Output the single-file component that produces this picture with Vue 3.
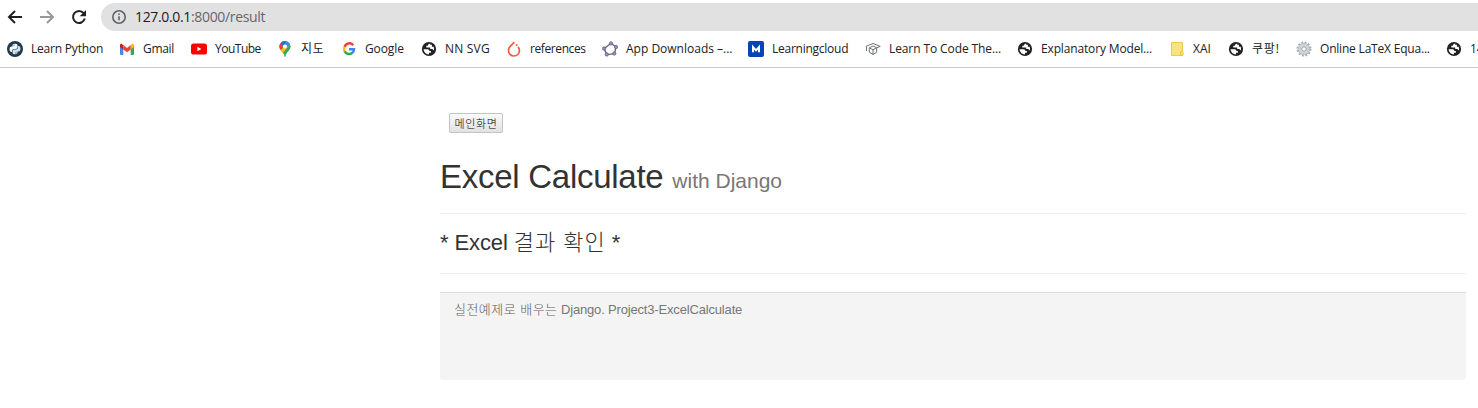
<script setup>
const bookmarks = [
  { icon: 'python', label: 'Learn Python', width: 112, spacing: -0.2 },
  { icon: 'gmail', label: 'Gmail', width: 72, spacing: -0.3 },
  { icon: 'youtube', label: 'YouTube', width: 86, spacing: -0.5 },
  { icon: 'maps', label: '지도', width: 64, spacing: 0.8 },
  { icon: 'google', label: 'Google', width: 80, spacing: -0.1 },
  { icon: 'globe', label: 'NN SVG', width: 85, spacing: 0.2 },
  { icon: 'torch', label: 'references', width: 96, spacing: -0.4 },
  { icon: 'geogebra', label: 'App Downloads –...', width: 146, spacing: 0 },
  { icon: 'mcloud', label: 'Learningcloud', width: 117, spacing: -0.25 },
  { icon: 'cap', label: 'Learn To Code The...', width: 152, spacing: -0.1 },
  { icon: 'globe', label: 'Explanatory Model...', width: 152, spacing: -0.15 },
  { icon: 'note', label: 'XAI', width: 59, spacing: 0 },
  { icon: 'globe', label: '쿠팡!', width: 68, spacing: 0.8 },
  { icon: 'gear', label: 'Online LaTeX Equa...', width: 150, spacing: -0.2 },
  { icon: 'globe', label: '14', width: 60, spacing: 0 },
]
</script>

<template>
  <div class="window">
    <div class="toolbar">
      <svg class="nav" viewBox="0 0 16 16"><path d="M15 8H2M8 2L2 8l6 6" /></svg>
      <svg class="nav off" viewBox="0 0 16 16"><path d="M1 8h13M8 2l6 6-6 6" /></svg>
      <svg class="nav" viewBox="0 0 16 16"><path d="M12.7 4.2A6 6 0 1 0 13.8 9.6" /><path class="solid" d="M15 1v6.3H8.7z" /></svg>
      <div class="address">
        <svg class="info" viewBox="0 0 16 16"><circle cx="8" cy="8" r="6.2" /><path d="M8 7.2v4M8 4.4v1.6" /></svg>
        <span class="url">127.0.0.1<span class="path">:8000/result</span></span>
      </div>
    </div>

    <div class="bookmarks">
      <div v-for="(b, i) in bookmarks" :key="i" class="bookmark" :style="{ width: b.width + 'px' }">
        <svg class="icon" viewBox="0 0 16 16">
          <g v-if="b.icon === 'python'">
            <circle cx="8" cy="8" r="8" fill="#1e3a50" />
            <path d="M5.5 5.5V4q0-1.3 2.5-1.3T10.5 4v2.2Q10.5 8 8.5 8H7Q5 8 5 9.8V11H4Q2.500 11 2.500 8.200T4.300 5.500H8" fill="#f4f7f9" />
            <path d="M10.500 10.500V12q0 1.300-2.500 1.300T5.500 12V9.800Q5.500 8.500 7.500 8.500H9Q11 8.500 11 6.200V5h1q1.500 0 1.500 2.800t-1.800 2.700H8" fill="#d9e2e8" />
            <circle cx="7" cy="4.100" r=".6" fill="#1e3a50" /><circle cx="9" cy="11.900" r=".6" fill="#1e3a50" />
          </g>
          <g v-else-if="b.icon === 'gmail'">
            <path d="M1 4v9q0 1 1 1h2.300V6z" fill="#4285f4" />
            <path d="M15 4v9q0 1-1 1h-2.300V6z" fill="#34a853" />
            <path d="M11.700 4.500v4L15 6V4q0-1.800-1.800-1.200z" fill="#fbbc04" />
            <path d="M1 4v2l3.300 2.500v-4L2.800 2.800Q1 2.200 1 4z" fill="#c5221f" />
            <path d="M4.300 4.100L8 7l3.700-2.900v4.400L8 11.300 4.300 8.500z" fill="#ea4335" />
          </g>
          <g v-else-if="b.icon === 'youtube'">
            <rect y="2.500" width="16" height="11" rx="2.600" fill="#f00" /><path d="M6.400 5.700v4.600l4-2.300z" fill="#fff" />
          </g>
          <g v-else-if="b.icon === 'maps'">
            <path d="M8 0a5.600 5.600 0 0 1 5.600 5.600C13.600 9.500 9 11 8.500 15.500q-.5 1-1 0C7 11 2.400 9.500 2.400 5.600A5.600 5.600 0 0 1 8 0z" fill="#34a853" />
            <path d="M8 5.600L3.500 9A6 6 0 0 1 3.700 2z" fill="#ea4335" />
            <path d="M3.500 9Q5 11 6 12l6.500-7.800L8 5.600z" fill="#fbbc04" />
            <path d="M3.700 2A5.600 5.600 0 0 1 9.700.3L6 5z" fill="#1a73e8" />
            <path d="M9.700.3A5.600 5.600 0 0 1 13 3.300L9 8 6 5z" fill="#4285f4" />
            <circle cx="8" cy="5.600" r="2.100" fill="#fff" />
          </g>
          <g v-else-if="b.icon === 'google'" fill="none" stroke-width="2.500">
            <path d="M12.200 4.200A5 5 0 0 0 3.600 5.800" stroke="#ea4335" />
            <path d="M3.600 5.700a5 5 0 0 0 0 4.600" stroke="#fbbc05" />
            <path d="M3.600 10.200A5 5 0 0 0 11.400 11.800" stroke="#34a853" />
            <path d="M8 8.200h5Q12.900 10.500 11.300 11.900" stroke="#4285f4" />
          </g>
          <g v-else-if="b.icon === 'globe'">
            <circle cx="8" cy="8" r="7.100" fill="#202124" />
            <path d="M9.200 2.600Q6.800 3.200 6.800 4.700H5.300v1.900h3.900v1.500h2.200l1.200 1.500Q13.600 8 12.700 5.700H10.900V3.800H9.200z" fill="#fff" />
            <path d="M2.500 8.200h4.300q1.600 0 1.600 1.700h1.500v1.800H8v1.700Q3.200 13.300 2.500 8.200z" fill="#fff" />
          </g>
          <g v-else-if="b.icon === 'torch'">
            <path d="M8.400 1.200L4 5.700a5.500 5.500 0 1 0 8 .1" fill="none" stroke="#ee5a40" stroke-width="1.700" />
            <circle cx="10.700" cy="4" r="1" fill="#ee5a40" />
          </g>
          <g v-else-if="b.icon === 'geogebra'">
            <path d="M9 2.300L14 6l-1.500 6.600-7.700 1L2 7.600z" fill="none" stroke="#666" stroke-width="1.400" />
            <g fill="#8c8ce6" stroke="#555" stroke-width=".6"><circle cx="9" cy="2.400" r="1.700" /><circle cx="14" cy="6" r="1.700" /><circle cx="12.300" cy="12.500" r="1.700" /><circle cx="4.800" cy="13.500" r="1.700" /><circle cx="2" cy="7.500" r="1.700" /></g>
          </g>
          <g v-else-if="b.icon === 'mcloud'">
            <rect width="16" height="16" rx="2" fill="#0646b4" /><path d="M5 11.300V6L8 9.300 11 6v5.300" fill="none" stroke="#fff" stroke-width="2" />
          </g>
          <g v-else-if="b.icon === 'cap'" fill="none" stroke="#6f7276" stroke-width="1">
            <path d="M.8 5.400L8 2.500l7.200 2.900-3.200 1.300M1.500 5.500v4.500M4.300 6.800v4.400L8 13.500l3.700-2.300V6.800L8 5 4.300 6.800 8 8.800l3.700-2M8 8.500v5" />
          </g>
          <g v-else-if="b.icon === 'note'">
            <path d="M2.500 1.500h11v13h-11z" fill="#fee182" stroke="#f0c84e" />
            <rect x="11.500" y="10.500" width="2.500" height="4" rx="1" fill="#fee182" stroke="#eabf3b" />
          </g>
          <g v-else fill="none">
            <circle cx="8" cy="8" r="6.500" stroke="#a5adb1" stroke-width="2" stroke-dasharray="1.700 1.700" />
            <circle cx="8" cy="8" r="4.300" stroke="#ccd2d5" stroke-width="2.800" />
            <circle cx="8" cy="8" r="2.300" stroke="#879197" stroke-width="1" /><circle cx="8" cy="8" r="5.800" stroke="#9aa4aa" stroke-width=".6" />
          </g>
        </svg>
        <span class="label" :style="{ letterSpacing: b.spacing + 'px' }">{{ b.label }}</span>
      </div>
    </div>

    <main class="page">
      <button class="home">메인화면</button>
      <h1>Excel Calculate <small>with Django</small></h1>
      <h3>* Excel <span class="ko">결과 확인</span> *</h3>
      <footer><span class="ko">실전예제로 배우는</span> Django. Project3-ExcelCalculate</footer>
    </main>
  </div>
</template>

<style>
body { margin: 0; background: #fff; overflow: hidden; }
</style>

<style scoped>
.window { width: 1478px; height: 408px; overflow: hidden; background: #fff; }
.toolbar { display: flex; align-items: center; height: 28px; padding: 3px 0 0 7px; }
.nav { flex: none; width: 16px; height: 16px; margin-right: 16px; fill: none; stroke: #202124; stroke-width: 2; }
.nav.off { stroke: #96989b; }
.nav .solid { fill: #202124; stroke: none; }
.address { display: flex; align-items: center; flex: 1; box-sizing: border-box; height: 28px; margin-left: -2px; padding-left: 10px; border-radius: 14px 0 0 14px; background: #e1e1e1; }
.info { width: 16px; height: 16px; margin-right: 8px; fill: none; stroke: #5f6368; stroke-width: 1.6; }
.url { font: 14px/20px "Open Sans", sans-serif; color: #202124; letter-spacing: -0.34px; }
.path { color: #65686c; }
.bookmarks { display: flex; align-items: center; box-sizing: border-box; height: 37px; padding-left: 7px; border-bottom: 1px solid #cbcccd; }
.bookmark { display: flex; flex: none; align-items: center; gap: 8px; }
.icon { flex: none; width: 16px; height: 16px; }
.label { font: 12px/16px "Open Sans", "Noto Sans CJK KR", sans-serif; color: #202124; white-space: nowrap; }
.page { width: 1026px; margin-left: 440px; padding-top: 45px; font-family: "Liberation Sans", "Noto Sans CJK KR", sans-serif; color: #333; }
.home { display: block; box-sizing: border-box; width: 54px; height: 20px; margin-left: 9px; padding: 0 0 1px; border: 1px solid #c3c3c3; border-radius: 2px; background: linear-gradient(#fafafa, #e2e2e2); font: 300 11px/16px "Noto Sans CJK KR", sans-serif; letter-spacing: 0.6px; color: #000; white-space: nowrap; }
h1 { box-sizing: border-box; height: 81px; margin: 0; padding-top: 25px; border-bottom: 1px solid #eee; font-size: 33px; font-weight: 400; line-height: 38px; letter-spacing: -0.27px; }
small { font-size: 21px; letter-spacing: 0; color: #777; }
h3 { box-sizing: border-box; height: 60px; margin: 0; padding-top: 15px; border-bottom: 1px solid #eee; font-size: 22px; font-weight: 400; line-height: 28px; letter-spacing: -0.1px; }
.ko { font-weight: 300; }
h3 .ko { letter-spacing: 0.95px; }
footer { box-sizing: border-box; height: 88px; margin-top: 18px; padding: 8px 14px; border-top: 1px solid #ddd; border-radius: 0 0 3px 3px; background: #f4f4f4; font-size: 13px; line-height: 18px; letter-spacing: -0.17px; color: #777; }
footer .ko { letter-spacing: 0.47px; color: #606060; }
</style>
